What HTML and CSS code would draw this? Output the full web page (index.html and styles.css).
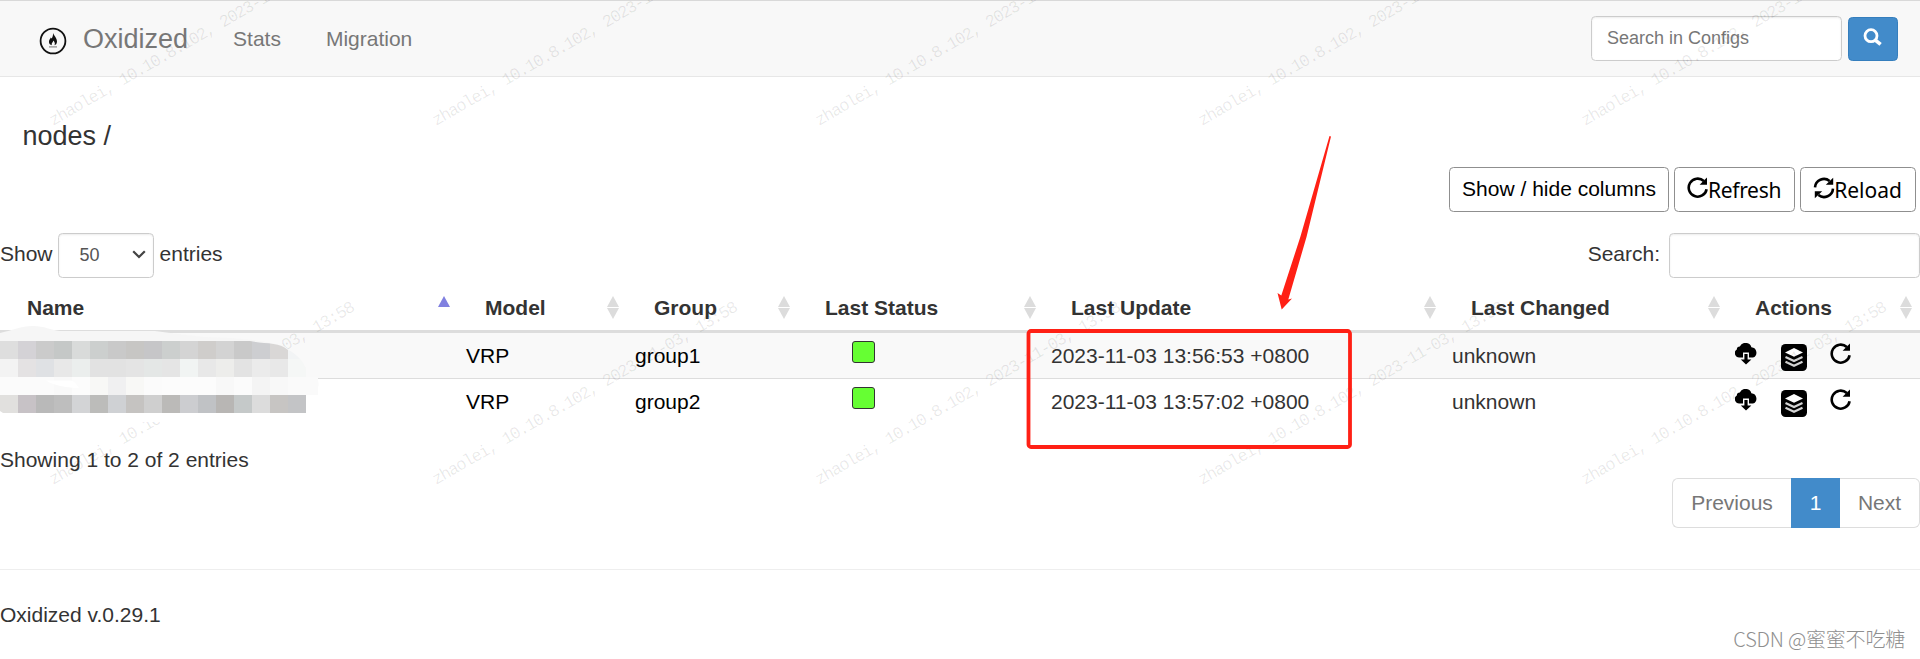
FILE: index.html
```html
<!DOCTYPE html>
<html lang="en">
<head>
    <meta charset="UTF-8">
    <meta name="viewport" content="width=device-width, initial-scale=1.0">
    <title>Oxidized</title>
    <link rel="stylesheet" href="styles.css">
</head>
<body>

    <!-- Shared icons -->
    <svg class="icon-defs" width="0" height="0">
        <symbol id="icon-repeat" viewBox="0 0 22 22">
            <path d="M16.8 4A9 9 0 1 0 19.6 12.2" fill="none" stroke="currentColor" stroke-width="2.6"/>
            <path d="M20 0.6V7.8H12.6Z" fill="currentColor"/>
        </symbol>
        <symbol id="icon-sync" viewBox="0 0 22 22">
            <path d="M2 10.4A9 9 0 0 1 16.6 4M20 11.6A9 9 0 0 1 5.4 18" fill="none" stroke="currentColor" stroke-width="2.6"/>
            <path d="M20.2 0.8V7.8H12.8ZM1.8 21.2V14.2H9.2Z" fill="currentColor"/>
        </symbol>
        <symbol id="icon-cloud" viewBox="0 0 22 22">
            <path d="M8 14.6H4.6A4.5 4.5 0 0 1 1.8 6.4A3 3 0 0 1 4.8 3.6A6.2 6.2 0 0 1 16.4 4.2A5.4 5.4 0 0 1 18 14.6H14V9.4H8Z" fill="currentColor"/>
            <path d="M9.4 11H12.6V16.4H16.4L11 21.6L5.8 16.4H9.4Z" fill="currentColor"/>
        </symbol>
        <symbol id="icon-stack" viewBox="0 0 26 27">
            <rect width="26" height="27" rx="4.5" fill="#000"/>
            <path d="M13 4L22 8.4L13 12.8L4 8.4Z" fill="#fff"/>
            <path d="M4.5 13L13 17L21.5 13M4.5 17.8L13 21.8L21.5 17.8" fill="none" stroke="#d4d4d4" stroke-width="2.2"/>
        </symbol>
    </svg>

    <!-- Navbar -->
    <nav class="navbar">
        <svg class="brand-icon" width="28" height="28" viewBox="0 0 28 28">
            <circle cx="14" cy="14" r="12.4" fill="none" stroke="#111" stroke-width="1.8"/>
            <path d="M14 6C15 9 18.2 11 18 14.8C17.9 16.8 16.8 18 15.4 18.2C16.6 16.6 15.4 14.8 14.3 13.4C14.2 15 12 16.2 12.9 18.2C11 17.8 9.8 16.4 10 14.4C10.2 12.4 11.4 12 11.7 10.6L12.7 11.6C13.7 9.8 14.2 8.2 14 6Z" fill="#111"/>
            <path d="M10 19.9H18" stroke="#888" stroke-width="1.2"/>
        </svg>
        <a class="brand">Oxidized</a>
        <a class="nav-link">Stats</a>
        <a class="nav-link">Migration</a>
        <form class="nav-search">
            <input type="text" class="form-control" placeholder="Search in Configs">
            <button type="button" class="search-btn">
                <svg width="20" height="20" viewBox="0 0 20 20">
                    <circle cx="8" cy="7.7" r="6" fill="none" stroke="#fff" stroke-width="2.8"/>
                    <path d="M12 11.8L17.6 16.4" stroke="#fff" stroke-width="3.6"/>
                </svg>
            </button>
        </form>
    </nav>

    <!-- Main Content -->
    <h4 class="page-title">nodes /</h4>

    <div class="toolbar">
        <button class="btn btn-columns">Show / hide columns</button>
        <button class="btn btn-refresh"><svg class="icon"><use href="#icon-repeat"/></svg><span>Refresh</span></button>
        <button class="btn btn-reload"><svg class="icon"><use href="#icon-sync"/></svg><span>Reload</span></button>
    </div>

    <div class="table-controls">
        <div class="length">
            <span>Show</span>
            <div class="form-control length-select">50
                <svg width="14" height="9" viewBox="0 0 14 9"><path d="M1.2 1.2L7 7L12.8 1.2" fill="none" stroke="#444" stroke-width="2.2"/></svg>
            </div>
            <span class="entries">entries</span>
        </div>
        <label class="filter"><span>Search:</span> <input type="text" class="form-control"></label>
    </div>

    <div class="table-wrap">
        <table class="nodes">
            <colgroup>
                <col class="c-name"><col class="c-model"><col class="c-group"><col class="c-status">
                <col class="c-update"><col class="c-changed"><col class="c-actions">
            </colgroup>
            <thead>
                <tr>
                    <th class="asc">Name</th>
                    <th>Model</th>
                    <th>Group</th>
                    <th>Last Status</th>
                    <th>Last Update</th>
                    <th>Last Changed</th>
                    <th>Actions</th>
                </tr>
            </thead>
            <tbody>
                <tr class="odd">
                    <td></td>
                    <td class="dark">VRP</td>
                    <td class="dark">group1</td>
                    <td><div class="status"></div></td>
                    <td>2023-11-03 13:56:53 +0800</td>
                    <td>unknown</td>
                    <td><div class="actions"><svg class="icon"><use href="#icon-cloud"/></svg><svg class="stack"><use href="#icon-stack"/></svg><svg class="icon"><use href="#icon-repeat"/></svg></div></td>
                </tr>
                <tr>
                    <td></td>
                    <td class="dark">VRP</td>
                    <td class="dark">group2</td>
                    <td><div class="status"></div></td>
                    <td>2023-11-03 13:57:02 +0800</td>
                    <td>unknown</td>
                    <td><div class="actions"><svg class="icon"><use href="#icon-cloud"/></svg><svg class="stack"><use href="#icon-stack"/></svg><svg class="icon"><use href="#icon-repeat"/></svg></div></td>
                </tr>
            </tbody>
        </table>
    </div>

    <div class="info">Showing 1 to 2 of 2 entries</div>

    <div class="pagination">
        <a class="prev">Previous</a>
        <a class="active">1</a>
        <a class="next">Next</a>
    </div>

    <footer class="footer">Oxidized v.0.29.1</footer>

    <!-- Overlays -->
    <svg class="overlay" id="watermark" width="1920" height="659"></svg>
    <svg class="overlay" width="320" height="430">
        <path d="M0 333C14 330 20 326 33 326C45 326 50 330 60 331L155 331C170 333 185 335 205 337C240 338 262 340 284 346C296 354 300 360 306 368V377H317C320 385 319 395 306 395H0Z" fill="#f6f6f6"/>
        <path d="M0 413H180V422H126V424H0Z" fill="#fff"/>
        <clipPath id="smear"><path d="M0 341H250C265 344 280 342 288 350C298 355 304 362 306 370V377H318V395H306V413H3L0 411Z"/></clipPath>
        <g id="mosaic" clip-path="url(#smear)"></g>
        <path d="M46 380.500H70C74 380 76 384 79 388C68 388 55 386 46 380.500Z" fill="#fff"/>
    </svg>
    <svg class="overlay" width="1920" height="659">
        <rect x="1028.500" y="331" width="321.500" height="116" rx="2.500" fill="none" stroke="#ff2015" stroke-width="3.800"/>
        <path d="M1329.500 136L1331 136.500L1306.500 237L1288.300 299.500L1292 298.500L1281.700 309.500L1277.500 293L1281.300 295.500L1300.300 237Z" fill="#ff2015"/>
    </svg>
    <div class="credit">CSDN @蜜蜜不吃糖</div>

    <script>
        const SVG = 'http://www.w3.org/2000/svg';

        // Repeating user watermark
        const watermark = document.getElementById('watermark');
        for (const y of [126, 485]) {
            for (let i = 0; i < 5; i++) {
                const text = document.createElementNS(SVG, 'text');
                text.setAttribute('transform', `translate(${53 + i * 383} ${y}) rotate(-30)`);
                text.setAttribute('textLength', 350);
                text.textContent = 'zhaolei, 10.10.8.102, 2023-11-03, 13:58';
                watermark.appendChild(text);
            }
        }

        // Censored node names
        const rows = [
            'dedede d4d2d6 cbcbcb c5c8c7 d9dbda cccfce c9c9c9 c7c6c4 c6c6c8 cccfce d4d4d4 cfcdcb d3d3d3 c9c9c9 cdced1 d9d7d6 f2f4f5',
            'f3f3f3 e4e2e3 dfe1e4 e8e8e8 ebeeed e2e2e2 e2e2e2 e4e4e4 e4e7e6 e5e5e5 f1f4f3 e8e8e8 ededeb e3e3e3 ebebeb e8e8e8 f5f7f6',
            'fbfbfb fbfbfb fbfbfb f9f9f9 fcfcfc f8f8f6 f0f0f1 f8f8f6 fbfbfb fcfcfc fcfcfc fcfcfc f8f8f8 fbfbfb f4f4f4 f8f8f8 fafafa fafafa',
            'e1e0de c7c2c6 b9b9b9 bebebe d3d4d6 bcbcba cfd1d4 c5c3c1 cfcfcf bbbab8 cccdd0 c0c2c5 b8b6b4 c5c9c9 dcdcdc c7c5c3 c3c4c6'
        ];
        const mosaic = document.getElementById('mosaic');
        rows.forEach((row, r) => {
            row.split(' ').forEach((color, c) => {
                const cell = document.createElementNS(SVG, 'rect');
                cell.setAttribute('x', c * 18);
                cell.setAttribute('y', 341 + r * 18);
                cell.setAttribute('width', 18);
                cell.setAttribute('height', 18);
                cell.setAttribute('fill', '#' + color);
                mosaic.appendChild(cell);
            });
        });
    </script>
</body>
</html>
```

FILE: styles.css
```css
* {
    margin: 0;
    padding: 0;
    box-sizing: border-box;
}

body {
    position: relative;
    height: 659px;
    overflow: hidden;
    background-color: #fff;
    color: #333;
    font-family: "Liberation Sans", Arial, sans-serif;
    font-size: 21px;
    line-height: 30px;
}

.icon-defs {
    position: absolute;
}

/* Navbar */
.navbar {
    display: flex;
    align-items: center;
    height: 77px;
    padding: 0 22px 0 39px;
    background-color: #f8f8f8;
    border-top: 1px solid #d9d9d9;
    border-bottom: 1px solid #e7e7e7;
    color: #777;
}

.brand-icon {
    margin-top: 5px;
}

.brand {
    margin-left: 16px;
    font-size: 27px;
}

.nav-link {
    margin-left: 45px;
}

.nav-search {
    display: flex;
    align-items: center;
    gap: 6px;
    margin-left: auto;
}

.form-control {
    width: 251px;
    height: 45px;
    padding: 0 15px;
    border: 1px solid #ccc;
    border-radius: 4.5px;
    background-color: #fff;
    box-shadow: inset 0 1px 2px rgba(0, 0, 0, 0.075);
    color: #555;
    font-family: inherit;
    font-size: 18px;
}

.form-control::placeholder {
    color: #777;
}

.search-btn {
    display: flex;
    align-items: center;
    justify-content: center;
    width: 50px;
    height: 44px;
    margin-top: 1px;
    border: 1px solid #357ebd;
    border-radius: 4.5px;
    background-color: #428bca;
}

.search-btn svg {
    margin-bottom: 2px;
}

/* Heading and buttons */
.page-title {
    padding: 44px 0 0 22.5px;
    font-size: 27px;
    font-weight: normal;
}

.toolbar {
    display: flex;
    justify-content: flex-end;
    gap: 5px;
    padding: 16px 4px 0 0;
}

.btn {
    display: flex;
    align-items: center;
    justify-content: center;
    height: 45px;
    border: 1px solid #8f8f8f;
    border-radius: 4.5px;
    background-color: #fff;
    color: #000;
    font-family: inherit;
    font-size: 21px;
}

.btn span {
    margin-top: 1px;
    font-family: "Noto Sans", sans-serif;
}

.btn .icon {
    margin: 0 -1px 4px -1px;
}

.btn-columns {
    width: 220px;
    padding-bottom: 1px;
}

.btn-refresh {
    width: 121px;
}

.btn-refresh span {
    letter-spacing: -0.3px;
}

.btn-reload {
    width: 116px;
}

.icon {
    width: 22px;
    height: 22px;
}

/* Table controls */
.table-controls {
    display: flex;
    justify-content: space-between;
    align-items: center;
    padding-top: 21px;
}

.length,
.filter {
    display: flex;
    align-items: center;
    gap: 5px;
    height: 45px;
}

.length span,
.filter span {
    padding-bottom: 4px;
}

.filter {
    gap: 9px;
}

.length-select {
    display: flex;
    align-items: center;
    justify-content: space-between;
    width: 96px;
    padding: 0 7px 2px 21px;
}

.entries {
    margin-left: 1px;
}

/* Nodes table */
.nodes {
    width: 1920px;
    table-layout: fixed;
    border-collapse: separate;
    border-spacing: 0;
}

.c-name { width: 458px; }
.c-model { width: 169px; }
.c-group { width: 171px; }
.c-status { width: 246px; }
.c-update { width: 400px; }
.c-changed { width: 284px; }
.c-actions { width: 192px; }

.nodes th {
    position: relative;
    height: 55px;
    padding: 15px 27px 7px;
    border-bottom: 3px solid #ddd;
    text-align: left;
}

/* Sort arrows */
.nodes th::before,
.nodes th::after {
    content: "";
    position: absolute;
    right: 8px;
    border: 6px solid transparent;
}

.nodes th::before {
    top: 18px;
    border-top: 0;
    border-bottom: 11px solid #dcdcdc;
}

.nodes th::after {
    top: 30px;
    border-bottom: 0;
    border-top: 11px solid #dcdcdc;
}

.nodes th.asc::before {
    border-bottom-color: #8080e0;
}

.nodes th.asc::after {
    display: none;
}

.nodes td {
    height: 46px;
    padding: 7px;
    border-top: 1px solid #ddd;
    white-space: nowrap;
}

.nodes .odd td {
    height: 45px;
    border-top: 0;
    background-color: #f9f9f9;
}

.nodes .dark {
    padding-left: 8px;
    color: #000;
}

.nodes td:nth-child(6) {
    padding-left: 8px;
}

.status {
    width: 23px;
    height: 22px;
    margin: -7px 0 0 47px;
    border: 1px solid #333;
    border-radius: 3px;
    background-color: #66ff33;
}

.actions {
    display: flex;
    align-items: flex-start;
    height: 28px;
    margin-top: -1px;
    padding-top: 2px;
    color: #000;
}

.stack {
    width: 26px;
    height: 27px;
    margin: 1px 23px 0 24px;
}

/* Info, pagination and footer */
.info {
    padding-top: 21px;
}

.pagination {
    display: flex;
    justify-content: flex-end;
    padding-top: 3px;
}

.pagination a {
    height: 50px;
    padding: 9px 0;
    border: 1px solid #ddd;
    color: #777;
    text-align: center;
}

.pagination .prev {
    width: 119px;
    border-right: 0;
    border-radius: 6px 0 0 6px;
}

.pagination .active {
    width: 49px;
    border-color: #428bca;
    background-color: #428bca;
    color: #fff;
}

.pagination .next {
    width: 80px;
    border-left: 0;
    border-radius: 0 6px 6px 0;
}

.footer {
    margin-top: 41px;
    padding-top: 30px;
    border-top: 1px solid #eee;
}

/* Overlays */
.overlay {
    position: absolute;
    top: 0;
    left: 0;
    pointer-events: none;
}

#watermark {
    fill: rgba(0, 0, 0, 0.09);
    font-family: "Liberation Mono", monospace;
    font-size: 17px;
}

.credit {
    position: absolute;
    right: 15px;
    bottom: 5px;
    color: #8f8f8f;
    font-family: "Noto Sans CJK SC", sans-serif;
    font-size: 20px;
    font-weight: 300;
    letter-spacing: -0.2px;
}
```
